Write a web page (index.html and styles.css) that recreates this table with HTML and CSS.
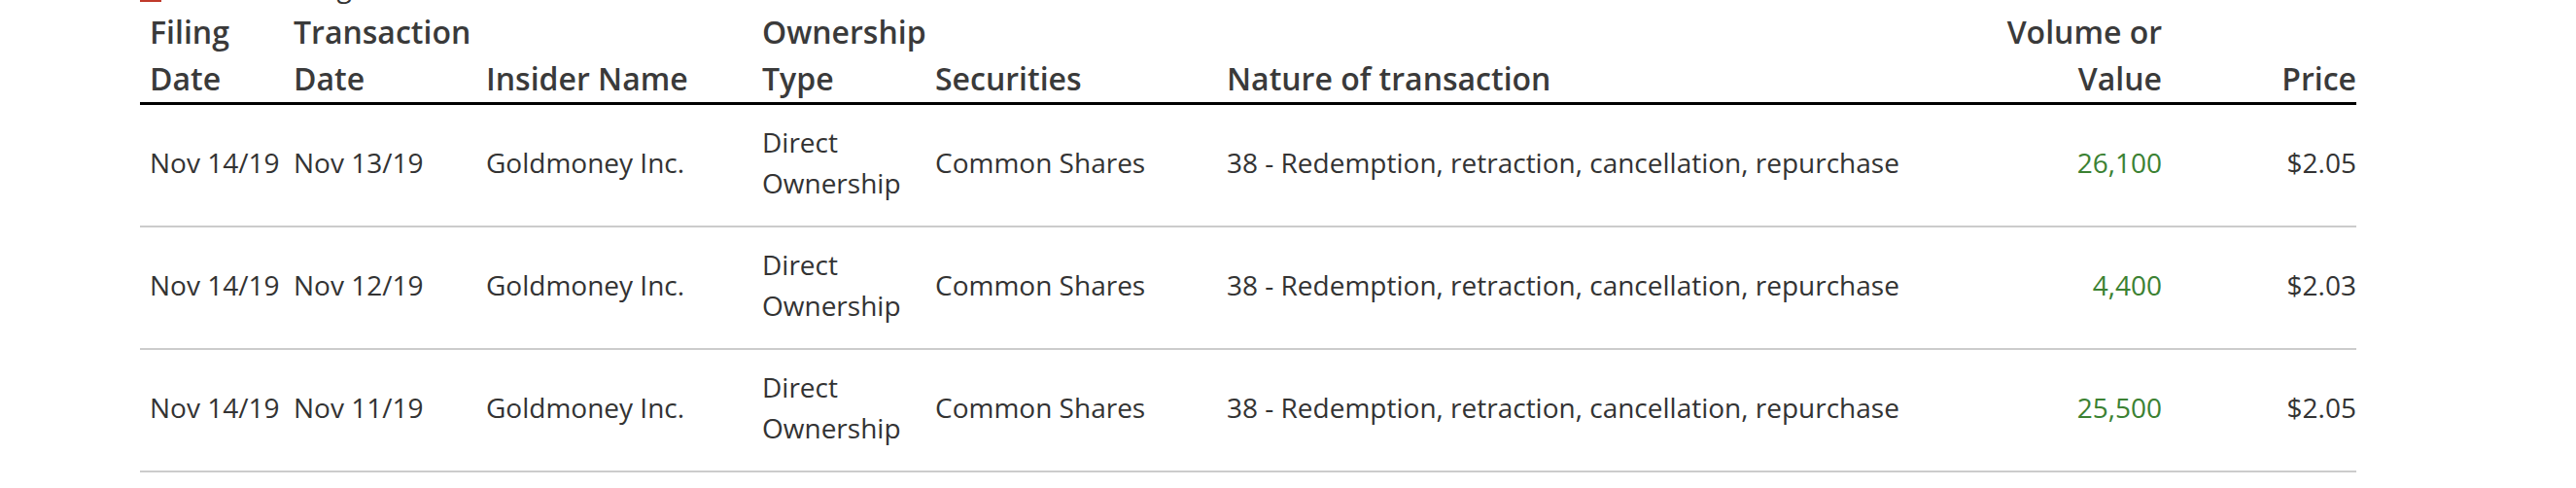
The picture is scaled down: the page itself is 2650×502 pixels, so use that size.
FILE: index.html
```html
<!DOCTYPE html>
<html lang="en">
<head>
<meta charset="utf-8">
<title>Insider Transactions</title>
<link rel="stylesheet" href="styles.css">
</head>
<body>
<div class="page">
  <div class="legend">
    <span class="legend-swatch"></span>
    <span class="legend-label">Insider Selling</span>
  </div>
  <table class="trades">
    <colgroup>
      <col class="c-filing">
      <col class="c-trans">
      <col class="c-name">
      <col class="c-own">
      <col class="c-sec">
      <col class="c-nature">
      <col class="c-vol">
      <col class="c-price">
    </colgroup>
    <thead>
      <tr>
        <th>Filing Date</th>
        <th>Transaction Date</th>
        <th>Insider Name</th>
        <th>Ownership Type</th>
        <th>Securities</th>
        <th>Nature of transaction</th>
        <th class="num">Volume or Value</th>
        <th class="num">Price</th>
      </tr>
    </thead>
    <tbody>
      <tr>
        <td>Nov 14/19</td>
        <td>Nov 13/19</td>
        <td>Goldmoney Inc.</td>
        <td>Direct Ownership</td>
        <td>Common Shares</td>
        <td>38 - Redemption, retraction, cancellation, repurchase</td>
        <td class="num vol">26,100</td>
        <td class="num">$2.05</td>
      </tr>
      <tr>
        <td>Nov 14/19</td>
        <td>Nov 12/19</td>
        <td>Goldmoney Inc.</td>
        <td>Direct Ownership</td>
        <td>Common Shares</td>
        <td>38 - Redemption, retraction, cancellation, repurchase</td>
        <td class="num vol">4,400</td>
        <td class="num">$2.03</td>
      </tr>
      <tr>
        <td>Nov 14/19</td>
        <td>Nov 11/19</td>
        <td>Goldmoney Inc.</td>
        <td>Direct Ownership</td>
        <td>Common Shares</td>
        <td>38 - Redemption, retraction, cancellation, repurchase</td>
        <td class="num vol">25,500</td>
        <td class="num">$2.05</td>
      </tr>
    </tbody>
  </table>
</div>
</body>
</html>
```

FILE: styles.css
```css
html, body {
  margin: 0;
  padding: 0;
  background: #ffffff;
}

body {
  font-family: "Open Sans", "Noto Sans", "Liberation Sans", sans-serif;
  color: #333333;
}

.page {
  padding-left: 144px;
}

.legend {
  display: flex;
  align-items: flex-end;
  gap: 14px;
  height: 42px;
  margin-top: -35px;
  font-size: 28px;
  line-height: 42px;
}

.legend-swatch {
  width: 22px;
  height: 22px;
  margin-bottom: 5px;
  background: #c0392b;
}

.legend-label {
  color: #333333;
}

.trades {
  width: 2280px;
  table-layout: fixed;
  border-collapse: collapse;
  border-spacing: 0;
}

.c-filing { width: 148px; }
.c-trans  { width: 198px; }
.c-name   { width: 284px; }
.c-own    { width: 178px; }
.c-sec    { width: 300px; }
.c-nature { width: 738px; }
.c-vol    { width: 234px; }
.c-price  { width: 200px; }

.trades th {
  font-size: 32px;
  font-weight: 600;
  line-height: 48px;
  text-align: left;
  vertical-align: bottom;
  padding: 2px 0 0 10px;
  border-bottom: 3px solid #000000;
  color: #3a3a3a;
}

.trades td {
  font-size: 28px;
  font-weight: 400;
  line-height: 42px;
  text-align: left;
  vertical-align: middle;
  padding: 17px 0 23px 10px;
  border-bottom: 2px solid #cccccc;
  color: #333333;
}

.trades .num {
  text-align: right;
}

.trades .vol {
  color: #3b8132;
}
```
